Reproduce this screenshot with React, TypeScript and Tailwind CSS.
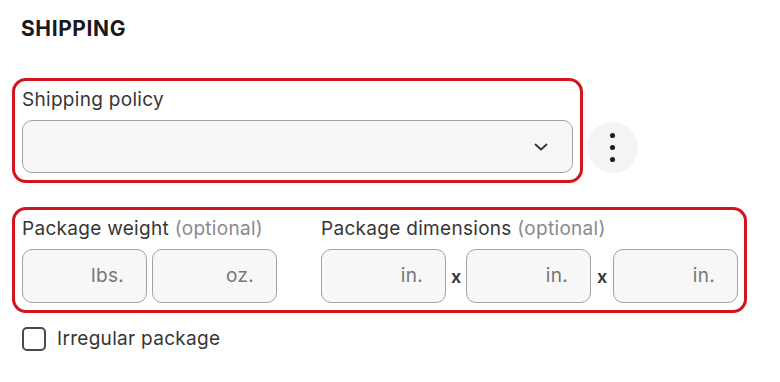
import React from 'react';

const UnitInput: React.FC<{ unit: string }> = ({ unit }) => (
    <div className="w-[125px] h-[54px] rounded-[10px] border border-[#a3a3a3] bg-[#f7f7f7] flex items-center justify-end pr-[22px] text-[19px] tracking-[0.3px] text-[#767676]">
        {unit}
    </div>
);

const App: React.FC = () => {
    return (
        <div className="w-[780px] h-[382px] bg-white font-['Inter',sans-serif] text-[#191919] overflow-hidden">
            <div className="pl-[12px] pt-[15px]">
                <h2 className="pl-[9px] text-[21px] leading-[27px] font-bold tracking-[0.6px]">SHIPPING</h2>

                <div className="mt-[36px] flex items-end">
                    <div className="w-[571px] h-[105px] border-[3px] border-[#d4141c] rounded-[14px] px-[7px] pt-[8px]">
                        <label className="block text-[19px] leading-[22px] tracking-[0.3px] text-[#363636]">Shipping policy</label>
                        <div className="mt-[9px] w-[551px] h-[53px] rounded-[10px] border border-[#a3a3a3] bg-[#f7f7f7] flex items-center justify-end pr-[24px]">
                            <svg width="14" height="8" viewBox="0 0 14 8" fill="none">
                                <path d="M1.5 1.5L7 6.5L12.5 1.5" stroke="#333" strokeWidth="1.8" strokeLinecap="round" strokeLinejoin="round" />
                            </svg>
                        </div>
                    </div>
                    <button className="ml-[4px] mb-[10px] w-[51px] h-[51px] rounded-full bg-[#f4f4f4] flex flex-col items-center justify-center gap-[7px]">
                        <span className="w-[5px] h-[5px] rounded-full bg-[#191919]" />
                        <span className="w-[5px] h-[5px] rounded-full bg-[#191919]" />
                        <span className="w-[5px] h-[5px] rounded-full bg-[#191919]" />
                    </button>
                </div>

                <div className="mt-[24px] w-[735px] h-[106px] border-[3px] border-[#d4141c] rounded-[14px] px-[7px] pt-[8px] flex gap-[44px]">
                    <div>
                        <label className="block text-[19px] leading-[22px] tracking-[0.3px] text-[#363636]">
                            Package weight <span className="text-[#8a8a8a]">(optional)</span>
                        </label>
                        <div className="mt-[9px] flex gap-[5px]">
                            <UnitInput unit="lbs." />
                            <UnitInput unit="oz." />
                        </div>
                    </div>
                    <div>
                        <label className="block text-[19px] leading-[22px] tracking-[0.3px] text-[#363636]">
                            Package dimensions <span className="text-[#8a8a8a]">(optional)</span>
                        </label>
                        <div className="mt-[9px] flex items-center">
                            <UnitInput unit="in." />
                            <span className="w-[20px] text-center text-[18px] font-semibold text-[#333]">x</span>
                            <UnitInput unit="in." />
                            <span className="w-[22px] text-center text-[18px] font-semibold text-[#333]">x</span>
                            <UnitInput unit="in." />
                        </div>
                    </div>
                </div>

                <label className="mt-[14px] ml-[10px] flex items-center gap-[11px]">
                    <span className="w-[24px] h-[24px] rounded-[5px] border-2 border-[#4a4a4a] bg-white" />
                    <span className="text-[19px] leading-[24px] tracking-[0.3px] text-[#363636]">Irregular package</span>
                </label>
            </div>
        </div>
    );
};

export default App;
